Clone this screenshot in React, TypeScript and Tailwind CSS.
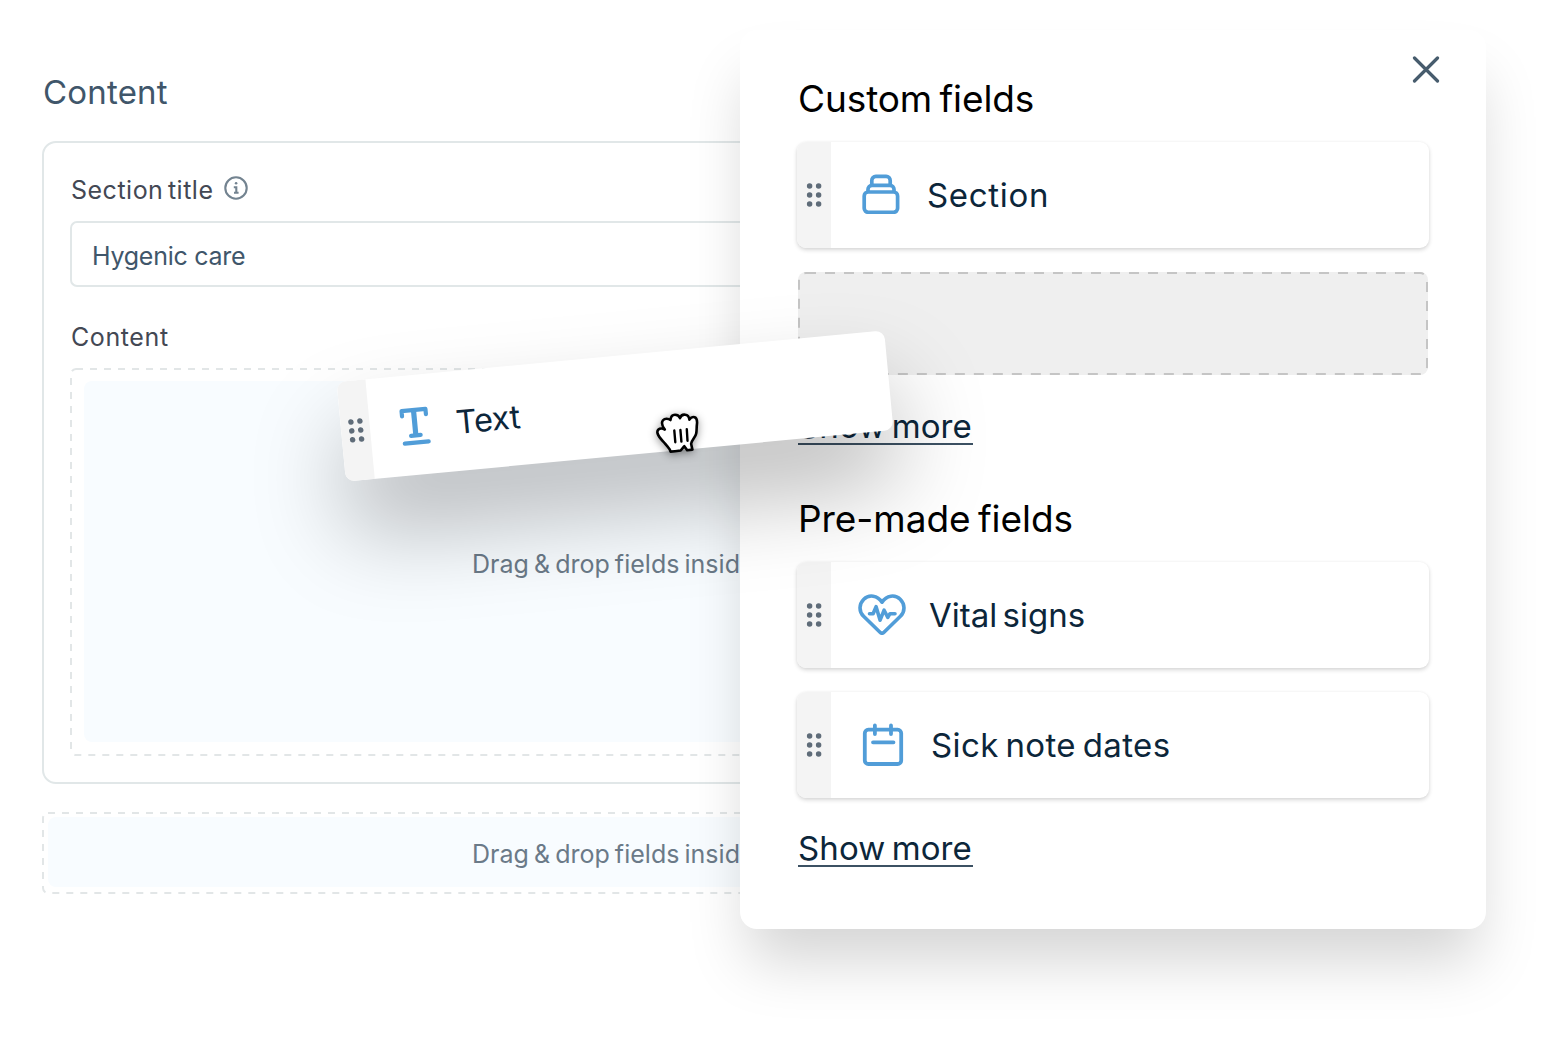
import type { ReactNode } from 'react';

const DOTS = [4, 13, 22];

function DragHandle({ className }: { className: string }) {
  return (
    <div className={`flex h-full shrink-0 items-center justify-center bg-[#f4f4f4] ${className}`}>
      <svg className="h-[26px] w-[18px]" viewBox="0 0 18 26" fill="#5f6c79">
        {DOTS.map((y) => (
          <g key={y}>
            <circle cx="4.6" cy={y} r="2.75" />
            <circle cx="13.6" cy={y} r="2.75" />
          </g>
        ))}
      </svg>
    </div>
  );
}

function DashedOutline({ className, dash, radius }: { className: string; dash: string; radius: number }) {
  return (
    <svg
      className={`pointer-events-none absolute left-px top-px h-[calc(100%-2px)] w-[calc(100%-2px)] overflow-visible ${className}`}
      fill="none"
    >
      <rect width="100%" height="100%" rx={radius} stroke="currentColor" strokeWidth="2" strokeDasharray={dash} />
    </svg>
  );
}

function SectionIcon() {
  return (
    <svg className="-ml-[2px] -mt-[2px] h-10 w-[38px]" viewBox="0 0 38 40" fill="none" stroke="#519dd8" strokeWidth="3.7">
      <rect x="2.2" y="18" width="33.4" height="20.3" rx="4" />
      <path d="M6 17.5v-2.2a4 4 0 0 1 4-4h18a4 4 0 0 1 4 4v2.2" />
      <path d="M9.8 11V6.4a4 4 0 0 1 4-4h10.400a4 4 0 0 1 4 4V11" />
    </svg>
  );
}

function HeartIcon() {
  return (
    <svg className="-mt-[1px] h-[41px] w-12" viewBox="0 0 48 41" fill="none" stroke="#519dd8" strokeWidth="3.6" strokeLinecap="round" strokeLinejoin="round">
      <path d="M24 8.2C19.5 1.2 11 .2 5.8 5.2 .8 10.2.8 17.5 5.6 22.3L22 38.2c1.2 1.2 2.8 1.2 4 0L42.400 22.300c4.800-4.800 4.800-12.100-.2-17.100C37 .2 28.500 1.200 24 8.200Z" />
      <path d="M11.500 19.700h3.600l3-7 4 13.500 4-10 3.700 7.200 2.200-3.700h5" />
    </svg>
  );
}

function CalendarIcon() {
  return (
    <svg className="-mt-[2px] ml-[2px] h-[43px] w-[42px]" viewBox="0 0 42 43" fill="none" stroke="#519dd8" strokeWidth="3.8" strokeLinecap="round">
      <rect x="2.8" y="6.700" width="36.400" height="34.300" rx="3.500" />
      <path d="M12.900 2.500v8.500M29 2.500v8.500M11 19.300h20.500" />
    </svg>
  );
}

function TextIcon() {
  return (
    <svg className="h-10 w-8" viewBox="0 0 32 40" fill="none" stroke="#519dd8" strokeLinecap="round" strokeLinejoin="round">
      <path d="M4 9.300V4h24v5.300" strokeWidth="4.200" />
      <path d="M16 4v25" strokeWidth="5.200" strokeLinecap="butt" />
      <path d="M11.200 29.500h9.600M4.200 36.700h24" strokeWidth="4.200" />
    </svg>
  );
}

function GrabCursor() {
  return (
    <svg className="h-[42px] w-11 drop-shadow-[0_2px_4px_rgba(0,0,0,0.4)]" viewBox="0 0 44 42" fill="white" stroke="black" strokeLinecap="round" strokeLinejoin="round">
      <path
        strokeWidth="2.6"
        d="M15.500 39.600c-.3-2.800-2.700-4.600-5.200-7.700C7.800 28.700 4 25.800 2.600 21.500c-1-3.400 1.700-5.600 4.900-4.900l2.300 1C7.500 14.500 6.200 10.500 8 8.300c1.800-2.200 5.300-2 7.500-.3.300-3.300 1.900-5.300 4.500-5.300 2.500 0 4.300 1.400 5 3.500.8-2.500 2.700-3.800 5.100-3.500 2.500.3 4 2 4.300 4.900 1.500-2.200 3.500-3 5.300-2.300 2.500 1 2.600 4.200 2.200 7.200-.4 3.200-.1 6-.7 9-.7 4-4.700 6.800-5.100 10.300l1.300 5.800-5.200.7-2.900-4.100-3.600 4.300c-2.800.5-7.300 1.100-10.200 1.100Z"
      />
      <path strokeWidth="2.4" fill="none" d="m19.300 18.500 1 11.700M25.400 17.900l1 11.700M31.800 17.300l.7 11.400" />
    </svg>
  );
}

function FieldCard({ label, children, className }: { label: string; children: ReactNode; className: string }) {
  return (
    <div className="flex h-[106px] w-[632px] items-center overflow-hidden rounded-[9px] bg-white shadow-[0_2px_4px_rgba(0,0,0,0.16),0_0_3px_rgba(0,0,0,0.04)]">
      <DragHandle className="w-[34px]" />
      <div className="flex w-[101px] shrink-0 items-center justify-center">{children}</div>
      <span className={`whitespace-nowrap text-[33px] font-[430] leading-10 text-[#0c263a] ${className}`}>{label}</span>
    </div>
  );
}

function ShowMore() {
  return (
    <a className="block h-[38px] w-[175px] whitespace-nowrap border-b-2 border-[#3c5163] text-[33px] leading-[38px] tracking-[0.1px] text-[#0c263a] [word-spacing:-3px]">
      Show more
    </a>
  );
}

function DropHint() {
  return (
    <span className="whitespace-nowrap text-[25px] leading-8 tracking-[0.02px] text-[#6b7a88] [word-spacing:-2px]">
      Drag &amp; drop fields inside
    </span>
  );
}

export default function App() {
  return (
    <div className="relative h-[1038px] w-[1546px] overflow-hidden bg-white font-['Inter',sans-serif]">
      {/* Form editor */}
      <main className="flex w-[780px] flex-col pl-[42px] pt-[72px]">
        <h1 className="pl-px text-[33px] leading-10 tracking-[0.2px] text-[#40566a]">Content</h1>

        <section className="mt-[29px] h-[643px] rounded-[14px] border-2 border-[#e1e7e8] bg-white pl-[26px] pt-[31px]">
          <div className="flex h-8 items-center gap-[11px] pl-px">
            <label className="text-[25px] leading-8 tracking-[0.5px] text-[#434854] [word-spacing:-3px]">Section title</label>
            <svg className="mb-[4px] h-6 w-6" viewBox="0 0 24 24" fill="none" stroke="#738390" strokeWidth="2.1">
              <circle cx="12" cy="12" r="10.7" />
              <path d="M9.8 11.200h2.500v5.500M10 16.800h4.600" />
              <circle cx="12.1" cy="7.300" r="1.300" fill="#738390" stroke="none" />
            </svg>
          </div>
          <div className="mt-[15px] flex h-[66px] items-center rounded-l-[7px] border-2 border-r-0 border-[#e1e7e8] pl-5 pt-1">
            <span className="text-[25px] leading-8 tracking-[-0.25px] text-[#40566a]">Hygenic care</span>
          </div>
          <div className="mt-[34px] pl-px text-[25px] leading-8 tracking-[0.6px] text-[#434854]">Content</div>
          <div className="relative mt-[15px] h-[388px] pb-[14px] pl-[14px] pt-[13px]">
            <DashedOutline className="text-[#e2e6e7]" dash="7 7" radius={5} />
            <div className="flex h-full items-center rounded-lg bg-[#f8fcff] pl-[388px] pt-1">
              <DropHint />
            </div>
          </div>
        </section>

        <div className="relative mt-[28px] h-[82px] pb-[7px] pl-[6px] pt-[5px]">
          <DashedOutline className="text-[#e2e6e7]" dash="7 7" radius={5} />
          <div className="flex h-full items-center rounded-lg bg-[#f8fcff] pl-[424px] pt-1">
            <DropHint />
          </div>
        </div>
      </main>

      {/* Field picker */}
      <aside className="absolute left-[740px] top-[30px] h-[899px] w-[746px] rounded-[17px] bg-white pl-[57px] pt-[48px] shadow-[0_40px_60px_-8px_rgba(0,0,0,0.17)]">
        <svg className="absolute right-[46px] top-[26px] h-7 w-7" viewBox="0 0 28 28" stroke="#475c6d" strokeWidth="3.2" strokeLinecap="round">
          <path d="M2.500 2 25.500 25M25.500 2 2.500 25" />
        </svg>

        <h2 className="whitespace-nowrap pl-px text-[37px] font-[430] leading-[42px] tracking-[-0.1px] text-black [word-spacing:-3px]">
          Custom fields
        </h2>
        <div className="mt-[22px] flex flex-col gap-6">
          <FieldCard label="Section" className="-ml-[5px] tracking-[0.7px]">
            <SectionIcon />
          </FieldCard>
          <div className="relative ml-px h-[103px] w-[630px] rounded-lg bg-[#efefef]">
            <DashedOutline className="text-[#c5c5c5]" dash="10 9" radius={7} />
          </div>
        </div>
        <div className="ml-px mt-[32px]">
          <ShowMore />
        </div>

        <h2 className="mt-[53px] whitespace-nowrap pl-px text-[37px] font-[430] leading-[42px] tracking-[-0.05px] text-black [word-spacing:-3px]">
          Pre-made fields
        </h2>
        <div className="mt-[22px] flex flex-col gap-6">
          <FieldCard label="Vital signs" className="-ml-[3px] [word-spacing:-4px]">
            <HeartIcon />
          </FieldCard>
          <FieldCard label="Sick note dates" className="-ml-[1px] tracking-[0.4px] [word-spacing:-3px]">
            <CalendarIcon />
          </FieldCard>
        </div>
        <div className="ml-px mt-[31px]">
          <ShowMore />
        </div>
      </aside>

      {/* Field being dragged */}
      <div className="absolute left-[340px] top-[356px] flex h-[100px] w-[550px] rotate-[-5.4deg] items-center overflow-hidden rounded-[9px] bg-white shadow-[0_52px_92px_rgba(0,0,0,0.27)]">
        <DragHandle className="w-[29px]" />
        <div className="ml-[29px] mt-[2px]">
          <TextIcon />
        </div>
        <span className="ml-[25px] mt-[3px] text-[32.5px] font-[430] leading-10 tracking-[-0.3px] text-[#0c263a]">Text</span>
      </div>
      <div className="absolute left-[655px] top-[412px]">
        <GrabCursor />
      </div>
    </div>
  );
}
